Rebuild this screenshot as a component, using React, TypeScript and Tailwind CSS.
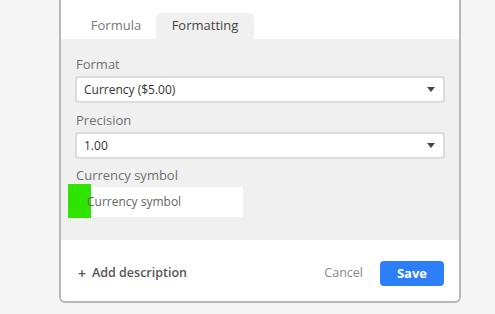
import React from 'react';

// Caret used by the dropdown selects
function Caret() {
  return (
    <svg width="8" height="5" viewBox="0 0 8 5" className="shrink-0">
      <path d="M0 0 H8 L4 5 Z" fill="#444" />
    </svg>
  );
}

function SelectBox({ value }: { value: string }) {
  return (
    <div className="flex h-[27px] items-center justify-between rounded-[4px] border-2 border-[#dcdcdc] bg-white pl-[7px] pr-[8px]">
      <span className="text-[12px] text-[#333]">{value}</span>
      <Caret />
    </div>
  );
}

function FieldLabel({ children }: { children: React.ReactNode }) {
  return <div className="mb-[3px] ml-px text-[13px] leading-[18px] text-[#707070]">{children}</div>;
}

export default function App() {
  return (
    <div className="min-h-screen bg-[#f5f5f5] font-['Open_Sans',sans-serif]" style={{ height: 314 }}>
      <div className="ml-[59px] w-[402px] rounded-b-[6px] border-x-2 border-b-2 border-[#b8b8b8] bg-white">
        {/* Tabs */}
        <div className="flex pl-[15px] pt-[13px]">
          <div className="flex h-[26px] w-[80px] items-center justify-center text-[13px] text-[#777]">Formula</div>
          <div className="flex h-[26px] w-[98px] items-center justify-center rounded-t-[5px] bg-[#f0f0f0] text-[13px] text-[#444]">
            Formatting
          </div>
        </div>

        {/* Body */}
        <div className="bg-[#f0f0f0] px-[14px] pb-[23px] pt-[16px]">
          <FieldLabel>Format</FieldLabel>
          <SelectBox value="Currency ($5.00)" />

          <div className="mt-[8px]">
            <FieldLabel>Precision</FieldLabel>
            <SelectBox value="1.00" />
          </div>

          <div className="mt-[7px]">
            <FieldLabel>Currency symbol</FieldLabel>
            <div className="relative h-[30px] w-[168px] rounded-[3px] bg-white">
              <div className="absolute left-[-7px] top-[-3px] h-[34px] w-[23px] bg-[#2ee400]" />
              <span className="relative flex h-full items-center pl-[12px] text-[12px] text-[#666]">Currency symbol</span>
            </div>
          </div>
        </div>

        {/* Footer */}
        <div className="flex h-[61px] items-center justify-between pl-[17px] pr-[15px] pt-[6px]">
          <div className="flex items-center gap-[6px] text-[12.5px] font-semibold text-[#555]">
            <span className="text-[14px]">+</span>
            <span>Add description</span>
          </div>
          <div className="flex items-center gap-[17px]">
            <span className="text-[12.5px] text-[#888]">Cancel</span>
            <button className="flex h-[25px] w-[64px] items-center justify-center rounded-[4px] bg-[#2d7ff9] text-[13px] font-bold text-white">
              Save
            </button>
          </div>
        </div>
      </div>
    </div>
  );
}
